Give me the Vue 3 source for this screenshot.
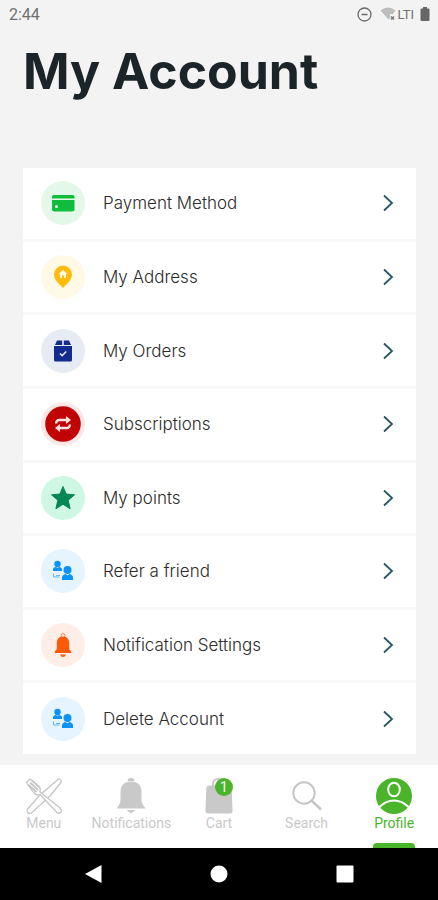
<script setup>
import { ref } from "vue";

// Account menu entries
const items = [
  { id: "payment", label: "Payment Method", icon: "card" },
  { id: "address", label: "My Address", icon: "pin" },
  { id: "orders", label: "My Orders", icon: "box" },
  { id: "subscriptions", label: "Subscriptions", icon: "repeat" },
  { id: "points", label: "My points", icon: "star" },
  { id: "refer", label: "Refer a friend", icon: "people" },
  { id: "notifications", label: "Notification Settings", icon: "bell" },
  { id: "delete", label: "Delete Account", icon: "people" },
];

// Bottom tabs
const tabs = [
  { id: "menu", label: "Menu" },
  { id: "notifications", label: "Notifications" },
  { id: "cart", label: "Cart" },
  { id: "search", label: "Search" },
  { id: "profile", label: "Profile" },
];

const activeTab = ref("profile");
const cartCount = ref(1);
</script>

<template>
  <div class="screen">
    <header class="status">
      <span class="status__time">2:44</span>
      <div class="status__icons">
        <svg width="15" height="15" viewBox="0 0 15 15" fill="none" stroke="#6a6a6a">
          <circle cx="7.5" cy="7.5" r="6.5" stroke-width="1.3" />
          <path d="M4.5 7.5h6" stroke-width="1.5" />
        </svg>
        <svg class="status__wifi" width="16" height="14" viewBox="0 0 16 14">
          <path d="M0.5 3.5Q8-2.5 15.5 3.5L13 7H10V11L8.5 12.5Z" fill="#bdbdbd" />
          <path d="M11 9.500l3 3m0-3l-3 3" stroke="#777" stroke-width="1.5" />
        </svg>
        <span class="status__lte">LTI</span>
        <svg class="status__battery" width="10" height="14" viewBox="0 0 10 14">
          <path d="M3 0h4v1.500h1.500a1 1 0 0 1 1 1V13a1 1 0 0 1-1 1h-7a1 1 0 0 1-1-1V2.500a1 1 0 0 1 1-1H3z" fill="#666" />
        </svg>
      </div>
    </header>

    <main class="account">
      <h1 class="account__title">My Account</h1>

      <div class="account__list">
        <button v-for="item in items" :key="item.id" type="button" class="row">
          <span class="row__icon" :class="`row__icon--${item.icon}`">
            <svg v-if="item.icon === 'card'" width="44" height="44" viewBox="0 0 44 44">
              <path d="M11 17.500v-1.500a2 2 0 0 1 2-2h18.500a2 2 0 0 1 2 2v1.500z" fill="#0fbd3c" />
              <path d="M11 19h22.500v9a2.500 2.500 0 0 1-2.500 2.500H13.500a2.500 2.500 0 0 1-2.500-2.500z" fill="#0fbd3c" />
              <circle cx="15.500" cy="25.500" r="1.500" fill="#e4f8e9" />
            </svg>
            <svg v-else-if="item.icon === 'pin'" width="44" height="44" viewBox="0 0 44 44">
              <path d="M22 33C18 28.500 13 25 13 19.500a9 9 0 0 1 18 0C31 25 26 28.500 22 33z" fill="#fdbb0b" />
              <path d="M22 15l4.500 4H25v4h-2v-2.500h-2V23h-2v-4h-1.500z" fill="#fffbea" />
            </svg>
            <svg v-else-if="item.icon === 'box'" width="44" height="44" viewBox="0 0 44 44">
              <path d="M16 11.500h5.200v4.500H14z M22.800 11.500H28l2 4.500h-7.200z" fill="#122b8c" />
              <path d="M13 17h18v14a1.500 1.500 0 0 1-1.500 1.500h-15A1.500 1.500 0 0 1 13 31z" fill="#122b8c" />
              <path d="M19 24.500l2.200 2.200 4-4.200" fill="none" stroke="#e8ecf5" stroke-width="1.600" />
            </svg>
            <svg v-else-if="item.icon === 'repeat'" width="44" height="44" viewBox="0 0 44 44">
              <circle cx="22" cy="22" r="17.800" fill="#c00303" />
              <path d="M15.200 21.500v-.5a3 3 0 0 1 3-3h7.300M28.800 22.500v.5a3 3 0 0 1-3 3h-7.300" fill="none" stroke="#fbe3e3" stroke-width="2.400" />
              <path d="M25 14l5 4-5 4z M19 22L14 26l5 4z" fill="#fbe3e3" />
            </svg>
            <svg v-else-if="item.icon === 'star'" width="44" height="44" viewBox="0 0 44 44">
              <path d="M22 10.500l3.200 7.600 8.300.7-6.300 5.400 1.900 8.600-7.100-4.600-7.100 4.600 1.900-8.600-6.300-5.400 8.300-.7z" fill="#078658" stroke="#078658" stroke-linejoin="round" />
            </svg>
            <svg v-else-if="item.icon === 'people'" width="44" height="44" viewBox="0 0 44 44" fill="#0b93fa">
              <circle cx="16.500" cy="15" r="3.200" />
              <path d="M12 22v-1.500q0-2 3-2.500l1.500 1 1.500-1q3 .5 3 2.500V22z" />
              <circle cx="26.500" cy="21" r="4" />
              <path d="M21 31v-2.500q0-2.500 3.500-3.500l2 1.500 2-1.500q3.500 1 3.500 3.500V31z" />
              <path d="M12.500 24.500v3.500h6M15 26.500h4" fill="none" stroke="#0b93fa" stroke-opacity=".6" />
            </svg>
            <svg v-else width="44" height="44" viewBox="0 0 44 44" fill="#fb5a0b">
              <circle cx="22" cy="12.500" r="2" fill="none" stroke="#fb5a0b" stroke-opacity=".7" />
              <path d="M22 13.500c4.500 0 6.200 3 6.200 7v5.500l2 2.500v1.500H13.800v-1.500l2-2.500v-5.500c0-4 1.700-7 6.200-7z" />
              <path d="M19 31.500h6q-1 2.500-3 2.500t-3-2.500z" />
            </svg>
          </span>
          <span class="row__label">{{ item.label }}</span>
          <svg class="row__arrow" width="12" height="18" viewBox="0 0 12 18" fill="none">
            <path d="M2 1.500L10 9l-8 7.500" stroke="#285564" stroke-width="1.800" />
          </svg>
        </button>
      </div>
    </main>

    <nav class="tabs">
      <button
        v-for="tab in tabs"
        :key="tab.id"
        type="button"
        class="tab"
        :class="{ 'tab--active': tab.id === activeTab }"
        @click="activeTab = tab.id"
      >
        <span class="tab__icon">
          <svg v-if="tab.id === 'menu'" width="38" height="38" viewBox="0 0 38 38" fill="#fff" stroke="#c6c6c6" stroke-width="1.300" stroke-linejoin="round">
            <path d="M33.500 2c2.500-.5 3.500 2 2 4L25 19 7 35.500c-3 2.500-6.500-.5-4-4L15 18z" />
            <path d="M1.500 5.500L5 2l8.500 7c2 2 2 4 1.500 6l20 16c3.500 3.500-.5 7-3.500 4L15 17.500c-3 1-5 0-6.500-2z" />
            <path d="M3 7.500l8.500 7.500M5 5.500l8 7.500M7 3.500l7 6.500" fill="none" stroke-width="1.800" />
          </svg>
          <svg v-else-if="tab.id === 'notifications'" width="38" height="38" viewBox="0 0 38 38" fill="#c9c9c9">
            <path d="M15.500 4a3.500 3 0 0 1 7 0z" />
            <path d="M19 4.500c7.500 0 10.500 4.500 10.500 10.500v8c0 3 1.500 5.500 4 8.500h-29c2.500-3 4-5.500 4-8.500v-8c0-6 3-10.500 10.500-10.500z" />
            <path d="M14.500 33h9l-4.500 3.500z" />
          </svg>
          <svg v-else-if="tab.id === 'cart'" width="38" height="38" viewBox="0 0 38 38">
            <path d="M13 10V7q0-5 6-5t6 5v3" fill="none" stroke="#c9c9c9" stroke-width="2" />
            <path d="M9 8.500h20q2.500 0 2.700 2.500l.8 23q0 2.500-2.500 2.500H8q-2.500 0-2.500-2.500l.8-23q.2-2.500 2.700-2.500z" fill="#c9c9c9" />
          </svg>
          <svg v-else-if="tab.id === 'search'" width="38" height="38" viewBox="0 0 38 38" fill="none" stroke="#c6c6c6">
            <circle cx="16" cy="16" r="10.700" stroke-width="2" />
            <path d="M24 24l9 8.500" stroke-width="2.600" />
          </svg>
          <svg v-else width="38" height="38" viewBox="0 0 38 38">
            <circle cx="19" cy="19" r="18" fill="#4ab52b" />
            <ellipse cx="19" cy="12.500" rx="5.800" ry="6.800" fill="none" stroke="#fff" stroke-width="2" />
            <path d="M4.500 30Q11 23.500 19 23.500T33.500 30" fill="none" stroke="#fff" stroke-width="2.200" />
          </svg>
          <span v-if="tab.id === 'cart' && cartCount" class="tab__badge">{{ cartCount }}</span>
        </span>
        <span class="tab__label">{{ tab.label }}</span>
      </button>
    </nav>

    <footer class="system">
      <button type="button" class="system__key" aria-label="Back">
        <svg width="18" height="20" viewBox="0 0 18 20" fill="#fff"><path d="M17.500 1v18L1 10z" /></svg>
      </button>
      <button type="button" class="system__key" aria-label="Home">
        <svg width="18" height="18" viewBox="0 0 18 18" fill="#fff"><circle cx="9" cy="9" r="8.500" /></svg>
      </button>
      <button type="button" class="system__key" aria-label="Recent apps">
        <svg width="18" height="18" viewBox="0 0 18 18" fill="#fff"><rect x=".5" y=".5" width="17" height="17" rx="1" /></svg>
      </button>
    </footer>
  </div>
</template>

<style>
body {
  margin: 0;
}
</style>

<style scoped>
.screen {
  display: flex;
  flex-direction: column;
  min-height: 100vh;
  background: #f3f3f3;
  font-family: Inter, Roboto, sans-serif;
}

button {
  margin: 0;
  padding: 0;
  border: none;
  background: transparent;
  font: inherit;
  cursor: pointer;
}

svg {
  display: block;
}

/* Status bar */
.status {
  display: flex;
  align-items: center;
  justify-content: space-between;
  height: 28px;
  padding: 0 8px 0 9px;
  font-family: Roboto, sans-serif;
  color: #707070;
}

.status__time {
  font-size: 16px;
}

.status__icons {
  display: flex;
  align-items: center;
}

.status__wifi {
  margin-left: 8px;
}

.status__lte {
  margin-left: 1px;
  font-size: 13px;
}

.status__battery {
  margin-left: 6px;
}

/* Account page */
.account {
  display: flex;
  flex: 1;
  flex-direction: column;
  padding: 13px 22px 11px 23px;
}

.account__title {
  margin: 0 0 67px;
  font-size: 50px;
  font-weight: 700;
  line-height: 60px;
  color: #1b2428;
}

.account__list {
  display: grid;
  flex: 1;
  grid-auto-rows: 1fr;
  gap: 3px;
  background: #f8f8f8;
}

.row {
  display: flex;
  align-items: center;
  min-height: 60px;
  padding: 0 22px 0 18px;
  background: #fff;
  text-align: left;
}

.row__icon {
  width: 44px;
  height: 44px;
  border-radius: 50%;
}

.row__icon--card {
  background: #e4f8e9;
}

.row__icon--pin {
  background: #fff9e6;
}

.row__icon--box {
  background: #e7ebf4;
}

.row__icon--repeat {
  background: #fde6e6;
}

.row__icon--star {
  background: #cef7e4;
}

.row__icon--people {
  background: #e5f4ff;
}

.row__icon--bell {
  background: #ffeee8;
}

.row__label {
  flex: 1;
  margin-left: 18px;
  font-size: 17px;
  font-weight: 300;
  line-height: 20px;
  color: #2c2c2c;
}

/* Bottom tabs */
.tabs {
  display: grid;
  grid-template-columns: repeat(5, 1fr);
  height: 83px;
  background: #fff;
}

.tab {
  position: relative;
  display: flex;
  flex-direction: column;
  align-items: center;
  padding-top: 12px;
  font-family: Roboto, sans-serif;
  font-size: 14px;
  line-height: 16px;
  color: #c9c9c9;
}

.tab--active {
  color: #4ab52b;
}

.tab--active::after {
  content: "";
  position: absolute;
  bottom: 0;
  width: 42px;
  height: 5px;
  border-radius: 4px 4px 0 0;
  background: #4ab52b;
}

.tab__icon {
  position: relative;
}

.tab__badge {
  position: absolute;
  top: 1px;
  right: 5px;
  width: 18px;
  height: 18px;
  border-radius: 50%;
  background: #4ab52b;
  font-size: 14px;
  line-height: 18px;
  color: #fff;
}

/* System navigation */
.system {
  display: flex;
  align-items: center;
  justify-content: center;
  gap: 90px;
  height: 52px;
  background: #000;
}

.system__key {
  display: flex;
  align-items: center;
  justify-content: center;
  width: 36px;
  height: 36px;
}
</style>
